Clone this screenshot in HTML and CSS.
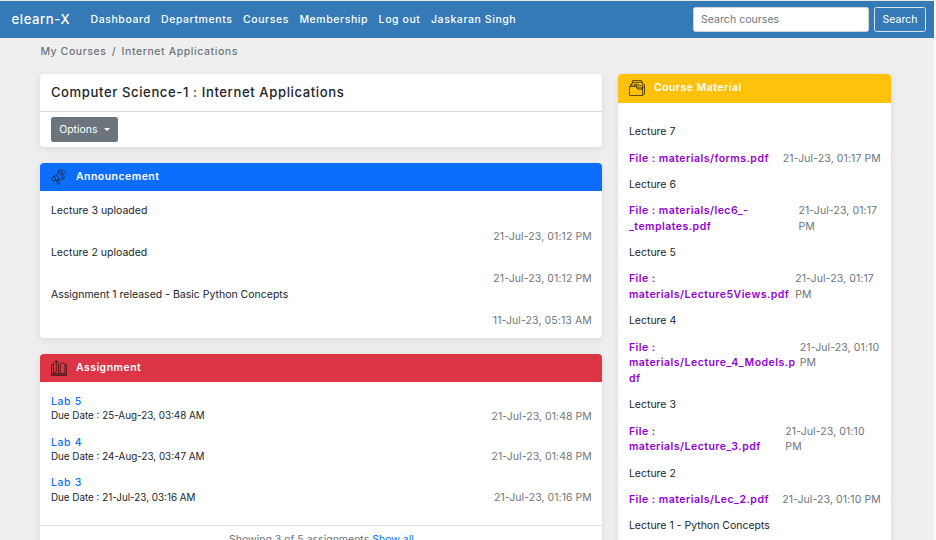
FILE: index.html
```html
<!DOCTYPE html>
<html lang="en">
<head>
<meta charset="utf-8">
<title>elearn-X</title>
<link rel="stylesheet" href="styles.css">
</head>
<body>
<div class="page">
<header class="navbar">
  <a class="brand">elearn-X</a>
  <nav class="links"><a>Dashboard</a><a>Departments</a><a>Courses</a><a>Membership</a><a>Log out</a><a>Jaskaran Singh</a></nav>
  <form class="search"><input type="text" placeholder="Search courses"><button type="button">Search</button></form>
</header>
<div class="crumbs"><span>My Courses</span><span>/</span><span>Internet Applications</span></div>
<div class="layout">
  <main class="main">
    <section class="card course">
      <h1>Computer Science-1 : Internet Applications</h1>
      <div class="course-body"><button class="options" type="button">Options<i class="caret"></i></button></div>
    </section>
    <section class="card">
      <h2 class="head blue">
        <svg class="icon" viewBox="0 0 16 16"><path d="M1 8.8 5.9 6 8.1 1.2q.9-.9 1.8.5l3.3 6q.6 1.4-.5 1.8-.8.1-1.4-.9L7.9 2.4M5.9 6l2.7 4.6 4-1.1M8.6 10.6l-5.4 1.2q-1.4.3-2.1-1Q.3 9.5 1 8.8M3 7.7l2 3.6M5 11.6l2.2 3.6q1 .6 1.6-.4L7.3 11M10.2 4q1.8-.3 2 1.7M11.2 2.1l.5-1.6M12.8 3.3 15 1.5M13.6 5l2.2-.4"/></svg>
        Announcement</h2>
      <div class="body">
        <div class="notice"><p>Lecture 3 uploaded</p><time>21-Jul-23, 01:12 PM</time></div>
        <div class="notice"><p>Lecture 2 uploaded</p><time>21-Jul-23, 01:12 PM</time></div>
        <div class="notice"><p>Assignment 1 released - Basic Python Concepts</p><time>11-Jul-23, 05:13 AM</time></div>
      </div>
    </section>
    <section class="card">
      <h2 class="head red">
        <svg class="icon" viewBox="0 0 16 16"><path d="M.5 4.5v11h15v-11M.5 4.5h2M15.5 4.5H14M2.5 13.5V3.2L5.3.6v10.8l-2.8 2.1M5.3.6 7.4 3v11M2.5 13.5q3-.9 5.4 1.3 2.6-2.2 6.1-1.3V4.5L12.8 3q-2.6-.4-3.6 1v8.8M7.4 14l1.8-1.2M.5 14.2h5.8M9.6 14.2h5.9"/></svg>
        Assignment</h2>
      <div class="body tasks">
        <div class="task"><div><a>Lab 5</a><small>Due Date : 25-Aug-23, 03:48 AM</small></div><time>21-Jul-23, 01:48 PM</time></div>
        <div class="task"><div><a>Lab 4</a><small>Due Date : 24-Aug-23, 03:47 AM</small></div><time>21-Jul-23, 01:48 PM</time></div>
        <div class="task"><div><a>Lab 3</a><small>Due Date : 21-Jul-23, 03:16 AM</small></div><time>21-Jul-23, 01:16 PM</time></div>
      </div>
      <footer class="foot">Showing 3 of 5 assignments <a>Show all</a></footer>
    </section>
  </main>
  <aside class="card side">
    <h2 class="head yellow">
      <svg class="icon" viewBox="0 0 16 16"><path d="M.5 6.5h6l1.4 1.4h5.7v7.6H.5v-9M13.6 15.5l1.9-1.5V4.5h-2V2.4H3v4M3.3 2.4V.6h9.4v1.8M1.5 6.3V4.5H3M4.8 4.3h5M4.8 5.5h2M7.5 5.8h6v3.4H8.8L7.5 7.6V5.8M13.6 7.7l1.9-1.3"/></svg>
      Course Material</h2>
    <div class="body files">
      <p>Lecture 7</p>
      <div class="file"><a>File : materials/forms.pdf</a><time>21-Jul-23, 01:17 PM</time></div>
      <p>Lecture 6</p>
      <div class="file"><a>File : materials/lec6_-_templates.pdf</a><time>21-Jul-23, 01:17 PM</time></div>
      <p>Lecture 5</p>
      <div class="file"><a>File : materials/Lecture5Views.pdf</a><time>21-Jul-23, 01:17 PM</time></div>
      <p>Lecture 4</p>
      <div class="file"><a>File : materials/Lecture_4_Models.pdf</a><time>21-Jul-23, 01:10 PM</time></div>
      <p>Lecture 3</p>
      <div class="file"><a>File : materials/Lecture_3.pdf</a><time>21-Jul-23, 01:10 PM</time></div>
      <p>Lecture 2</p>
      <div class="file"><a>File : materials/Lec_2.pdf</a><time>21-Jul-23, 01:10 PM</time></div>
      <p>Lecture 1 - Python Concepts</p>
    </div>
  </aside>
</div>
</div>
</body>
</html>
```
FILE: styles.css
```css
* { box-sizing: border-box; margin: 0; }
html { background: #fafafa; overflow: hidden; }
body { font: 400 10.5px/15.75px Inter, "Liberation Sans", sans-serif; color: #212529; height: 540px; overflow: hidden; }
.page { width: 934px; height: 540px; overflow: hidden; background: #efefef; border-top: 1px solid #e9e8e0; }
.navbar { height: 37px; background: #337ab7; display: flex; align-items: center; padding: 0 8px 0 11.5px; color: #fff; letter-spacing: .58px; font-weight: 500; }
.brand { font-size: 13.1px; width: 79px; padding-top: 1px; }
.links { display: flex; gap: 10.5px; flex: 1; white-space: nowrap; padding-top: 1px; }
.search { display: flex; gap: 5px; }
.search input { width: 176px; height: 25px; border: 1px solid #ced4da; border-radius: 2.5px; padding: 0 7px; font: inherit; font-weight: 400; letter-spacing: .05px; background: #fff; }
.search input::placeholder { color: #6c757d; }
.search button { width: 52px; height: 25px; padding: 1px 0 0; border: 1px solid #d6e4f0; border-radius: 2.5px; background: none; color: #fff; font: inherit; font-weight: 400; letter-spacing: 0; }
.crumbs { display: flex; gap: 5.25px; padding: 5.6px 0 0 40.4px; height: 36px; color: #6c757d; font-weight: 500; letter-spacing: .58px; }
.layout { display: flex; gap: 16px; align-items: flex-start; padding-left: 40.4px; }
.main { width: 562px; display: flex; flex-direction: column; gap: 15.75px; }
.card { background: #fff; border-radius: 4px; overflow: hidden; box-shadow: 0 2px 9px rgba(0, 0, 0, .09); }
.side { width: 273px; height: 500px; }
.course { height: 73px; }
.course h1 { height: 37.5px; padding: 0 10.5px; font-size: 13.1px; font-weight: 500; line-height: 37px; letter-spacing: .6px; border-bottom: 1px solid #d8dadc; }
.course-body { padding: 5.5px 10.5px; }
.options { display: flex; align-items: center; justify-content: center; gap: 6px; width: 67px; height: 25px; padding: 0; border: 0; border-radius: 2.5px; background: #6c757d; color: #fff; font: inherit; }
.caret { border: 3px solid transparent; border-top-color: #fff; border-bottom: 0; }
.head { display: flex; align-items: center; gap: 9px; height: 28.2px; padding: 0 10.5px; color: #fff; font-size: 10.5px; font-weight: 600; letter-spacing: .47px; }
.icon { width: 16px; height: 16px; fill: none; stroke: #111; stroke-width: .65; stroke-linejoin: round; overflow: visible; }
.blue { background: #0d6efd; }
.red { background: #dc3545; }
.yellow { background: #ffc10a; height: 28.6px; }
.body { padding: 11.9px 10.5px 9.4px; }
.notice p { margin-bottom: 10.5px; }
time { color: #737779; letter-spacing: .1px; }
.notice time { display: block; text-align: right; }
.tasks { padding-top: 11.2px; }
.task { display: flex; justify-content: space-between; align-items: flex-end; height: 30.3px; margin-bottom: 10.5px; }
.task a { display: block; color: #0d6efd; font-weight: 500; letter-spacing: .66px; }
.task small { display: block; font-size: 9.85px; line-height: 14px; margin: -1.2px 0 1.2px; }
.task time { line-height: 14px; letter-spacing: .06px; }
.foot { border-top: 1px solid #dfe0e1; padding: 5.5px 5px; text-align: center; color: #6c757d; }
.foot a { color: #0d6efd; }
.files { padding-top: 21.7px; }
.files p, .file { margin-bottom: 10.5px; }
.file { display: flex; justify-content: space-between; }
.file a { color: #9400d3; font-weight: 600; letter-spacing: .48px; overflow-wrap: anywhere; }
.file time { color: #6c757d; }
```
